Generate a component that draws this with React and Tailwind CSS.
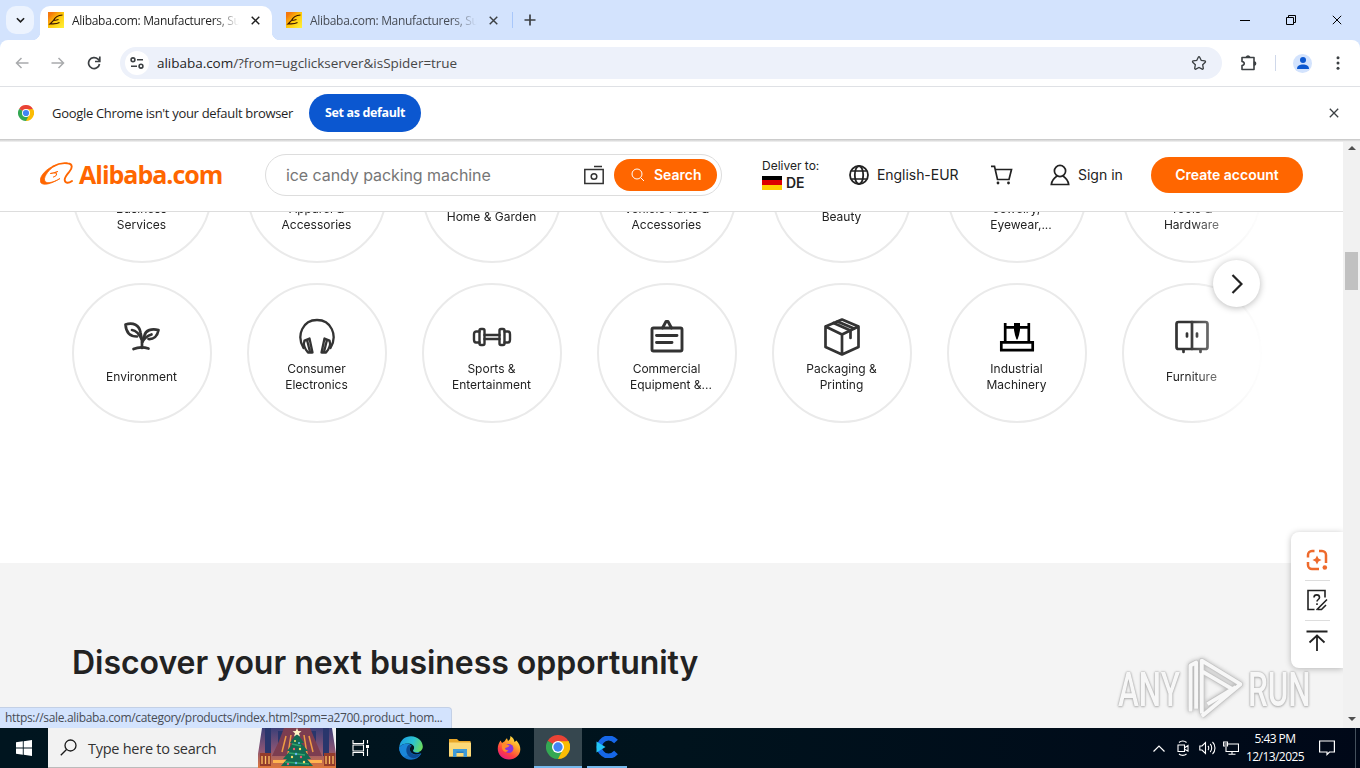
import { FaStar } from 'react-icons/fa';

const CHROME_FONT = "font-['Open_Sans','Noto_Sans',sans-serif]";

const TOP_ROW = [
  ['Business', 'Services'],
  ['Apparel &', 'Accessories'],
  ['Home & Garden'],
  ['Vehicle Parts &', 'Accessories'],
  ['Beauty'],
  ['Jewelry,', 'Eyewear,...'],
  ['Tools &', 'Hardware'],
];

const BOTTOM_ROW = [
  { lines: ['Environment'], icon: LeafIcon },
  { lines: ['Consumer', 'Electronics'], icon: HeadphonesIcon },
  { lines: ['Sports &', 'Entertainment'], icon: DumbbellIcon },
  { lines: ['Commercial', 'Equipment &...'], icon: SignIcon },
  { lines: ['Packaging &', 'Printing'], icon: BoxIcon },
  { lines: ['Industrial', 'Machinery'], icon: MachineIcon },
  { lines: ['Furniture'], icon: CabinetIcon },
];

/* ---------- category icons, 40x40 ---------- */

function CategorySvg({ children, color = '#333', width = 2.7 }) {
  return (
    <svg viewBox="0 0 40 40" className="w-10 h-10" fill="none" stroke={color} strokeWidth={width} strokeLinecap="round" strokeLinejoin="round">
      {children}
    </svg>
  );
}

function LeafIcon() {
  return (
    <CategorySvg>
      <path d="M15 19.500C8 19.500 4 15 3.500 7.500C11 5 17.500 8 18.500 15.500C19 18 19.500 21 20 23" />
      <path d="M10 13C14 13.500 17.500 17.500 20 23V31" />
      <path d="M26.500 22C31.500 22.500 35.500 19 36.500 13C29.500 11.500 23.500 13 22.500 18.500C22.300 20 21 22 20.200 25" />
      <path d="M29.500 17.500C26 18.500 22.500 21 20.200 25" />
      <path d="M11.500 32C16 30 22 30 26.500 31.500" />
    </CategorySvg>
  );
}

function HeadphonesIcon() {
  return (
    <CategorySvg width={2.300}>
      <path d="M6.500 31C-1 18 6 3 20 3S41 18 33.500 31" />
      <path d="M7.500 23.500L12.500 21.500L15.500 35.500H11C8 32 6 27.500 7.500 23.500ZM10 22.800L13 35" />
      <path d="M32.500 23.500L27.500 21.500L24.500 35.500H29C32 32 34 27.500 32.500 23.500ZM30 22.800L27 35" />
    </CategorySvg>
  );
}

function DumbbellIcon() {
  return (
    <CategorySvg width={2.400}>
      <rect x="7.500" y="12" width="5" height="16" rx="1.500" />
      <rect x="27.500" y="12" width="5" height="16" rx="1.500" />
      <path d="M7.500 14.500H4C2.500 14.500 2 16 2 17.500V22.500C2 24 2.500 25.500 4 25.500H7.500" />
      <path d="M32.500 14.500H36C37.500 14.500 38 16 38 17.500V22.500C38 24 37.500 25.500 36 25.500H32.500" />
      <path d="M12.500 18H27.500M12.500 22H27.500" />
    </CategorySvg>
  );
}

function SignIcon() {
  return (
    <CategorySvg width={2.900}>
      <rect x="5" y="11" width="30" height="23" rx="1.500" />
      <path d="M15.500 11L19 4.500H21L24.500 11M9.500 18.500H30M9.500 25.500H25" />
    </CategorySvg>
  );
}

function BoxIcon() {
  return (
    <CategorySvg width={2.700}>
      <path d="M20 2.500L36.500 9.500V30L20 37.500L3.500 30V9.500ZM3.500 9.500L20 17.500L36.500 9.500M20 17.500V37.500" />
      <path d="M11.500 6L28.500 13.500V21M15.500 4.500L32 11.500" />
    </CategorySvg>
  );
}

function MachineIcon() {
  return (
    <svg viewBox="0 0 40 40" className="w-10 h-10" fill="none" stroke="#000" strokeWidth="2.700">
      <path d="M4.300 25.300H35.700V33.200H4.300ZM8.200 6V25M31.800 6V25M8 10.300H32" />
      <path d="M17 6H23V13L22 18L20.500 22.500H19.500L18 18L17 13Z" fill="#000" stroke="none" />
    </svg>
  );
}

function CabinetIcon() {
  return (
    <CategorySvg>
      <rect x="4.500" y="5" width="31" height="27" rx="2" />
      <path d="M20 5V32M15 16.500V19.500M25 16.500V19.500M11.500 33V35M28.500 33V35" />
    </CategorySvg>
  );
}

/* ---------- brand marks ---------- */

function ChromeLogo({ className }) {
  return (
    <svg viewBox="0 0 48 48" className={className}>
      <path d="M24 24L3.200 12A24 24 0 0 1 44.800 12Z" fill="#ea4335" />
      <path d="M24 24L44.800 12A24 24 0 0 1 24 48Z" fill="#fbbc04" />
      <path d="M24 24V48A24 24 0 0 1 3.200 12Z" fill="#34a853" />
      <path d="M14.500 29.500L3.200 12L24 24ZM33.500 29.500L24 48L24 30Z" fill="#34a853" />
      <path d="M24 12.500H45A24 24 0 0 1 47 30L33 29Z" fill="#fbbc04" />
      <circle cx="24" cy="24" r="12" fill="#fff" />
      <circle cx="24" cy="24" r="9.300" fill="#4285f4" />
    </svg>
  );
}

function EdgeLogo() {
  return (
    <svg viewBox="0 0 24 24" className="w-6 h-6">
      <defs>
        <linearGradient id="edgeTop" x1="0" x2="1" y1=".3" y2=".6">
          <stop offset="0" stopColor="#1b9de2" />
          <stop offset=".55" stopColor="#2bc3d2" />
          <stop offset="1" stopColor="#6bdc5c" />
        </linearGradient>
      </defs>
      <path d="M.2 11C0 18 5 23.800 12 23.800C16.500 23.800 20 21.500 22.300 17.800L12 12Z" fill="#1473c8" />
      <path d="M.2 11.500C1 4 6 .2 12 .2C19 .2 23.800 5.500 23.800 10.500C23.800 14.500 20.500 16.300 17.500 16.300C14.500 16.300 13.500 15 14.500 13.800C16.500 10.500 13.500 7.800 9.500 7.600C5 7.500 1.800 9 .2 11.500Z" fill="url(#edgeTop)" />
      <path d="M.2 11.500C1.800 9 5 7.500 9.500 7.600L12.500 9.800L10 18L5 21C2 19 0 15 .2 11.500Z" fill="#1a86d9" />
      <path d="M9.500 9C6 12 6.500 19.500 12.500 21.800C16.500 23.200 20 20.500 22 17.800C17 20.300 10.500 18.500 10.800 13C11 11 12 10.300 12.500 9.800C11.500 9 10.500 8.800 9.500 9Z" fill="#0c4a92" />
      <path d="M11.200 11.500C9.800 15 13 19 18.500 18.300C20.500 18 22 17 22.800 16.300C20 17.500 16 17.200 14.500 15.800C13 14.300 15.500 13 14.500 11.200C13.500 9.800 11.800 10 11.200 11.500Z" fill="#02141f" />
    </svg>
  );
}

function FolderIcon() {
  return (
    <svg viewBox="0 0 22 20" className="w-[22px] h-5">
      <path d="M0 1H8L10 3H21.500V18.500H0Z" fill="#e8a628" />
      <path d="M0 4.500H22V18.500H0Z" fill="#fcd978" />
      <path d="M4 11H18V19H14.500V15H7.500V19H4Z" fill="#3f9bd8" />
      <path d="M7.500 13.500H14.500V15H7.500Z" fill="#2a7dbc" />
    </svg>
  );
}

function FirefoxLogo() {
  return (
    <svg viewBox="0 0 24 24" className="w-6 h-6">
      <defs>
        <linearGradient id="fox" x1=".8" x2=".2" y1="0" y2="1">
          <stop offset="0" stopColor="#fff04a" />
          <stop offset=".35" stopColor="#ffa22a" />
          <stop offset=".7" stopColor="#ff4040" />
          <stop offset="1" stopColor="#e3168a" />
        </linearGradient>
      </defs>
      <path d="M3.500 4.500L5 7L8 5C8.500 3.500 9 3 10 2.200L11 5C13 4 13.500 2 13.300 0C16 1.500 17.500 4 17.500 6L19.500 4.500C24.500 10 24.500 16.500 20 20.500C16 24.500 8 24.500 4 20.500C-.5 16 0 9.500 3.500 4.500Z" fill="url(#fox)" />
      <circle cx="11.800" cy="12.500" r="4.600" fill="#8a35dc" />
      <path d="M5 7.500C8 7 10 8.500 12.500 9.500C12 11.500 9 11 8 12.500C8.500 14 10 14.500 11.500 14C9 18 5.500 15 5 12Z" fill="#ff8a2a" />
    </svg>
  );
}

function AlibabaSwirl() {
  return (
    <svg viewBox="0 0 34 24" className="w-[34px] h-6 -mt-px" fill="none" stroke="#ff6600" strokeLinecap="round">
      <path d="M15 3.500C6 6.500 .2 14 .2 18.500C.2 24 9 23.500 20 16.500C13 20.800 5 22.500 4.500 18C4 14 9 7.500 15 3.500Z" fill="#ff6600" strokeWidth=".8" />
      <path d="M13 4.500C18 1.500 24 .8 27.500 1.300C33.500 2 32 6.500 29.500 9.500C27 12.500 24.500 15 24.700 18C25 21.500 28.500 21.500 32 19" strokeWidth="1.900" />
      <path d="M10.500 11.500C12.500 11.200 15 11 17.500 9.500M15 10.800C17.500 11.200 17 14 13.500 15" strokeWidth="1.100" />
    </svg>
  );
}

/* ---------- browser chrome ---------- */

function Cross({ className }) {
  return (
    <svg viewBox="0 0 10 10" className={className} stroke="currentColor" fill="none">
      <path d="M.8 .8L9.200 9.200M9.200 .8L.8 9.200" />
    </svg>
  );
}

function Favicon() {
  return (
    <svg viewBox="0 0 16 16" className="w-4 h-4 shrink-0">
      <defs>
        <linearGradient id="fav" x1="0" x2="1" y1="0" y2="1">
          <stop offset=".15" stopColor="#f5780c" />
          <stop offset=".5" stopColor="#ffc80a" />
          <stop offset="1" stopColor="#fff23a" />
        </linearGradient>
      </defs>
      <path d="M0 0H16V16H0Z" fill="url(#fav)" />
      <path d="M14.500 3C9 3.500 7 5 5.500 8.500L2 12C5 11.500 8 12.500 11.500 10.500M5 8.500C7 8.500 9 8 10.500 7.500" stroke="#3a1500" strokeWidth="1.100" fill="none" />
    </svg>
  );
}

function TabStrip() {
  return (
    <div className="h-10 bg-[#d3e3fd] flex pt-[6px]">
      <div className="ml-[6px] w-7 h-7 rounded-[10px] bg-[#ecf3fe] flex items-center justify-center text-[#1f1f1f]">
        <svg viewBox="0 0 10 6" className="w-[9px] h-[6px]" fill="none" stroke="currentColor" strokeWidth="1.800">
          <path d="M1 1L5 5L9 1" />
        </svg>
      </div>
      <div className="relative ml-[6px] w-[232px] h-[34px] rounded-t-[10px] bg-white flex items-start pt-[6px] pl-2">
        <span className="absolute -left-2 bottom-0 w-2 h-2 bg-[radial-gradient(circle_at_0_0,#d3e3fd_8px,#fff_8.500px)]" />
        <span className="absolute -right-2 bottom-0 w-2 h-2 bg-[radial-gradient(circle_at_100%_0,#d3e3fd_8px,#fff_8.500px)]" />
        <Favicon />
        <span className="ml-2 w-[167px] overflow-hidden whitespace-nowrap text-[12px] leading-[17px] tracking-[-0.31px] text-[#1f1f1f] mask-r-from-85% mask-r-to-100%">
          Alibaba.com: Manufacturers, Suppliers
        </span>
        <Cross className="ml-[12px] mt-1 w-[9px] h-[9px] text-[#1f1f1f] stroke-[1.600]" />
      </div>
      <div className="w-[240px] flex items-start pt-[6px] pl-[14px]">
        <Favicon />
        <span className="ml-2 w-[167px] overflow-hidden whitespace-nowrap text-[12px] leading-[17px] tracking-[-0.31px] text-[#474c55] mask-r-from-85% mask-r-to-100%">
          Alibaba.com: Manufacturers, Suppliers
        </span>
        <Cross className="ml-[12px] mt-1 w-[9px] h-[9px] text-[#3c4043] stroke-[1.600]" />
      </div>
      <span className="mt-[6px] w-px h-4 bg-[#a8c7fa]" />
      <svg viewBox="0 0 12 12" className="ml-[11px] mt-2 w-3 h-3 text-[#3c4043]" stroke="currentColor" strokeWidth="1.700">
        <path d="M6 .5V11.500M.5 6H11.500" />
      </svg>
      <div className="ml-auto mr-[18px] mt-[9px] flex gap-9 text-black">
        <svg viewBox="0 0 10 10" className="w-[10px] h-[10px]" stroke="currentColor">
          <path d="M0 5.500H10" />
        </svg>
        <svg viewBox="0 0 10 10" className="w-[10px] h-[10px]" stroke="currentColor" fill="none">
          <path d="M.5 2.500H7.500V9.500H.5ZM2.500 2.500V.5H9.500V7.500H7.500" />
        </svg>
        <Cross className="w-[10px] h-[10px]" />
      </div>
    </div>
  );
}

function Toolbar() {
  return (
    <div className="bg-[#d3e3fd]">
      <div className="h-[47px] rounded-t-[8px] bg-white border-b border-[#dfe1e5] flex items-start pt-[7px]">
        <div className="h-8 flex items-center">
          <svg viewBox="0 0 14 12" className="ml-[15px] w-[14px] h-3 text-[#a9abad]" fill="none" stroke="currentColor" strokeWidth="1.500">
            <path d="M13.500 6H1.500M6.500 1L1.500 6L6.500 11" />
          </svg>
          <svg viewBox="0 0 14 12" className="ml-[22px] w-[14px] h-3 text-[#a9abad]" fill="none" stroke="currentColor" strokeWidth="1.500">
            <path d="M.5 6H12.500M7.500 1L12.500 6L7.500 11" />
          </svg>
          <svg viewBox="0 0 14 14" className="ml-[22px] w-[14px] h-[14px] text-[#3c4043]" fill="none" stroke="currentColor" strokeWidth="1.700">
            <path d="M12.500 8A5.500 5.500 0 1 1 11 3.200L12.500 4.700" />
            <path d="M12.800 .5V5.500H8" />
          </svg>
        </div>
        <div className="ml-[19px] w-[1102px] h-8 rounded-full bg-[#edf1fa] flex items-center pl-[5px]">
          <span className="w-6 h-6 rounded-full bg-white flex items-center justify-center">
            <svg viewBox="0 0 14 12" className="w-[14px] h-3 text-[#3c4043]" fill="none" stroke="currentColor" strokeWidth="1.600">
              <circle cx="3" cy="2.800" r="1.900" />
              <circle cx="11" cy="9.200" r="1.900" />
              <path d="M7 2.800H13M1 9.200H7" />
            </svg>
          </span>
          <span className="ml-2 text-[13.500px] tracking-[-0.03px] text-[#474747] whitespace-nowrap">
            <span className="text-[#1f1f1f]">alibaba.com</span>/?from=ugclickserver&amp;isSpider=true
          </span>
          <FaStar className="ml-auto mr-4 -mt-px w-[14px] h-[14px] fill-transparent stroke-[#3c4043] stroke-[55px] overflow-visible" />
        </div>
        <div className="h-8 flex items-center">
          <svg viewBox="0 0 18 17" className="ml-[18px] -mt-[2px] w-[18px] h-[17px] text-[#3c4043]" fill="none" stroke="currentColor" strokeWidth="1.600" strokeLinejoin="round">
            <path d="M2 3.500H14V15.500H2V11.500C5 11 5 8 2 7.500Z" />
            <path d="M6.500 3A1.600 1.600 0 0 1 9.500 3ZM14.500 8A1.600 1.600 0 0 1 14.500 11Z" fill="currentColor" />
          </svg>
          <span className="ml-[17px] w-px h-4 bg-[#cfd8ea]" />
          <span className="ml-[17px] w-[19px] h-[19px] rounded-full bg-[#d3e3fd] flex items-center justify-center">
            <svg viewBox="0 0 12 12" className="w-3 h-3" fill="#0b57d0">
              <circle cx="6" cy="3" r="3" />
              <path d="M0 12C0 8.500 3 7.500 6 7.500S12 8.500 12 12Z" />
            </svg>
          </span>
          <svg viewBox="0 0 4 14" className="ml-[24px] w-1 h-[14px]" fill="#3c4043">
            <circle cx="2" cy="1.800" r="1.500" />
            <circle cx="2" cy="7" r="1.500" />
            <circle cx="2" cy="12.200" r="1.500" />
          </svg>
        </div>
      </div>
    </div>
  );
}

function InfoBar() {
  return (
    <div className="h-[52px] bg-white flex items-center pl-[18px] pr-[21px]">
      <ChromeLogo className="w-4 h-4" />
      <span className="ml-[18px] mt-px w-[257px] text-[13px] tracking-[-0.31px] text-[#1f1f1f] whitespace-nowrap">
        Google Chrome isn't your default browser
      </span>
      <button className="w-28 h-[38px] pt-px rounded-full bg-[#0b57d0] text-white text-[12.500px] font-bold tracking-[-0.35px] whitespace-nowrap">
        Set as default
      </button>
      <Cross className="ml-auto w-[10px] h-[10px] text-[#3c4043] stroke-[1.300]" />
    </div>
  );
}

/* ---------- page ---------- */

function SiteHeader() {
  return (
    <header className="h-[72px] shrink-0 bg-white border-b border-[#ddd] flex items-center pl-10 pr-10 pb-[2px] text-[14px] text-[#222] whitespace-nowrap">
      <AlibabaSwirl />
      <span className="ml-[5px] w-[186px] font-['Open_Sans'] font-bold text-[25px] tracking-[-1px] text-[#ff6600]">Alibaba.com</span>
      <div className="w-[457px] h-[42px] rounded-full border border-[#ddd] flex items-center pl-5 pr-1">
        <span className="w-[298px] text-[16px] tracking-[-0.08px] text-[#767676]">ice candy packing machine</span>
        <svg viewBox="0 0 20 20" className="w-5 h-5 shrink-0" fill="none" stroke="#333" strokeWidth="1.500">
          <path d="M.8 4.500H19.200V18.500H.8ZM10 1.500H18" />
          <circle cx="10" cy="11.500" r="2.800" />
        </svg>
        <button className="ml-[10px] w-[103px] h-8 shrink-0 rounded-full bg-[#ff6600] text-white font-semibold flex items-center pl-[17px]">
          <svg viewBox="0 0 14 14" className="w-[14px] h-[14px] mr-[9px]" fill="none" stroke="currentColor" strokeWidth="1">
            <circle cx="6" cy="6" r="5" />
            <path d="M9.800 9.800L13 13" />
          </svg>
          Search
        </button>
      </div>
      <div className="ml-10 w-[87px]">
        <div className="text-[12px] leading-4">Deliver to:</div>
        <div className="flex items-center leading-[18px] font-semibold">
          <span className="w-5 h-[14px] mr-1 flex flex-col">
            <i className="flex-1 bg-black" />
            <i className="flex-1 bg-[#d00]" />
            <i className="flex-1 bg-[#ffce00]" />
          </span>
          DE
        </div>
      </div>
      <svg viewBox="0 0 20 20" className="w-5 h-5 mr-2" fill="none" stroke="#222" strokeWidth="1.800">
        <circle cx="10" cy="10" r="9" />
        <ellipse cx="10" cy="10" rx="4.200" ry="9" />
        <path d="M2.500 6H17.500M2.500 14H17.500" strokeWidth="1.500" />
      </svg>
      <span className="w-[114px] tracking-[-0.05px]">English-EUR</span>
      <svg viewBox="0 0 22 20" className="w-[22px] h-5 mr-[37px]" fill="none" stroke="#222" strokeWidth="1.700">
        <path d="M0 1.300H3.500L6.500 14.500H18L20.500 4.500H4.200" />
        <circle cx="7" cy="18" r="1.400" fill="#222" stroke="none" />
        <circle cx="17.500" cy="18" r="1.400" fill="#222" stroke="none" />
      </svg>
      <svg viewBox="0 0 20 22" className="w-5 h-[22px] mr-2" fill="none" stroke="#222" strokeWidth="1.700">
        <circle cx="10" cy="7" r="5.600" />
        <path d="M7 12C4 14 1.800 17 1.300 20.500H18.700C18.200 17 16 14 13 12" />
      </svg>
      <span className="w-[73px]">Sign in</span>
      <button className="w-[152px] h-9 shrink-0 rounded-full bg-[#ff6600] text-white font-semibold">Create account</button>
    </header>
  );
}

function CategoryCircle({ lines, icon: Icon }) {
  return (
    <div className="w-[140px] h-[140px] shrink-0 rounded-full border-2 border-[#eaeaea] flex flex-col items-center pt-8">
      <div className="w-10 h-10">{Icon && <Icon />}</div>
      <div className="mt-1 mr-px h-8 flex flex-col justify-center text-center text-[12px] leading-4 text-[#222] whitespace-nowrap">
        {lines.map((line) => (
          <div key={line} className={line.endsWith('...') ? '-mr-[9px]' : ''}>{line}</div>
        ))}
      </div>
    </div>
  );
}

function Categories() {
  return (
    <section className="relative h-[351px] shrink-0 bg-white pl-[72px]">
      <div className="w-[1200px] h-full overflow-hidden mask-r-from-[1116px] mask-r-to-[1194px]">
        <div className="-mt-[89px] flex gap-[35px]">
          {TOP_ROW.map((lines) => (
            <CategoryCircle key={lines.join()} lines={lines} />
          ))}
        </div>
        <div className="mt-5 flex gap-[35px]">
          {BOTTOM_ROW.map((c) => (
            <CategoryCircle key={c.lines.join()} lines={c.lines} icon={c.icon} />
          ))}
        </div>
      </div>
      <button className="absolute left-[1213px] top-[48px] w-[47px] h-[47px] rounded-full bg-white shadow-[0_1px_7px_rgba(0,0,0,0.28)] flex items-center justify-center">
        <svg viewBox="0 0 12 20" className="w-3 h-5" fill="none" stroke="#222" strokeWidth="2.200">
          <path d="M1.500 1L10.500 10L1.500 19" />
        </svg>
      </button>
    </section>
  );
}

function SideTools() {
  return (
    <div className="absolute right-[17px] top-[392px] w-[52px] h-[136px] rounded-l-lg bg-white shadow-[0_1px_6px_rgba(0,0,0,0.25)] flex flex-col items-center pt-2">
      <div className="h-[41px] w-[25px] border-b border-[#ddd] flex items-center justify-center">
        <svg viewBox="0 0 22 22" className="w-[22px] h-[22px] shrink-0" fill="none" stroke="#ee6a2c" strokeWidth="2.500">
          <path d="M8.500 2H6A4 4 0 0 0 2 6V8.500M2 13V16A4 4 0 0 0 6 20H13M13 2H16A4 4 0 0 1 20 6V14" />
          <path d="M11 6.500L12.500 9.500L15.500 11L12.500 12.500L11 15.500L9.500 12.500L6.500 11L9.500 9.500Z" fill="#ee6a2c" stroke="none" />
          <circle cx="18.800" cy="18.500" r="2.300" fill="#ee6a2c" stroke="none" />
        </svg>
      </div>
      <div className="h-10 w-[25px] border-b border-[#ddd] flex items-center justify-center pb-[2px]">
        <svg viewBox="0 0 22 22" className="w-[22px] h-[22px] shrink-0" fill="none" stroke="#222" strokeWidth="1.600">
          <path d="M8.500 20.500H2V1.500H19V8.500M10.500 21L21 10.500M12 20.500H15.500L20 16" />
          <path d="M8 8.500C8 5 13.500 5 13.500 8.500C13.500 10.500 11 10.500 11 12.500M11 14.300V16" />
        </svg>
      </div>
      <div className="h-10 flex items-center">
        <svg viewBox="0 0 22 22" className="w-[22px] h-[22px]" fill="none" stroke="#222" strokeWidth="1.800">
          <path d="M.5 1.500H21.500M11 21V5.500M3.500 12.500L11 5.500L18.500 12.500" />
        </svg>
      </div>
    </div>
  );
}

function Watermark() {
  const letters =
    "text-[48px] leading-[50px] font-['Roboto'] font-medium text-[#f9f9f9] origin-left [text-shadow:0_0_2px_#888,0_0_3px_#aaa,0_1px_3px_#aaa]";
  return (
    <div className="absolute left-[1118px] top-[510px] w-[200px] h-[76px] opacity-75">
      <span className={`absolute left-0 top-[15px] scale-x-[0.655] ${letters}`}>ANY</span>
      <svg viewBox="0 0 60 70" className="absolute left-[67px] top-[5px] w-[60px] h-[66px] drop-shadow-[0_0_2px_#999]" fill="none">
        <path d="M4 60V11L10 8V57M16 62V6L57 31L16 65M16 17L48 36M22 52L52 34" stroke="#b4b4b4" strokeWidth="5.500" strokeLinejoin="round" />
        <path d="M4 60V11L10 8V57M16 62V6L57 31L16 65M16 17L48 36M22 52L52 34" stroke="#f8f8f8" strokeWidth="4" strokeLinejoin="round" />
      </svg>
      <span className={`absolute left-[130px] top-[15px] scale-x-[0.655] ${letters}`}>RUN</span>
    </div>
  );
}

function Scrollbar() {
  return (
    <div className="relative w-[17px] shrink-0 bg-[#f1f1f1] flex flex-col items-center">
      <svg viewBox="0 0 8 4" className="mt-[6px] w-2 h-1" fill="#505050">
        <path d="M0 4L4 0L8 4Z" />
      </svg>
      <span className="mt-[102px] w-[13px] h-[38px] bg-[#c1c1c1]" />
      <svg viewBox="0 0 8 4" className="mt-auto mb-[7px] w-2 h-1" fill="#505050">
        <path d="M0 0L4 4L8 0Z" />
      </svg>
    </div>
  );
}

function Page() {
  return (
    <div className="relative h-[588px] flex mt-px font-['Inter',sans-serif]">
      <main className="w-[1343px] flex flex-col overflow-hidden">
        <SiteHeader />
        <Categories />
        <section className="flex-1 bg-[#f4f4f4] pl-[72px] pt-20">
          <h2 className="text-[32px] leading-10 font-semibold tracking-[-0.03px] text-[#222] whitespace-nowrap">
            Discover your next business opportunity
          </h2>
        </section>
      </main>
      <SideTools />
      <Scrollbar />
      <Watermark />
      <div className="absolute inset-x-0 -top-px h-[3px] bg-linear-to-b from-[#c4c4c4] to-[#f4f4f4]" />
      <div className={`absolute left-0 bottom-0 w-[452px] h-[21px] rounded-tr-[4px] border-t border-r border-[#c3d0e6] bg-[#d3e3fd] pl-[5px] text-[12px] leading-5 tracking-[-0.33px] text-[#474c55] whitespace-nowrap ${CHROME_FONT}`}>
        https://sale.alibaba.com/category/products/index.html?spm=a2700.product_hom...
      </div>
    </div>
  );
}

/* ---------- taskbar ---------- */

function HolidayArt() {
  return (
    <svg viewBox="0 0 78 40" className="w-[78px] h-10">
      <defs>
        <linearGradient id="sky" x1="0" x2="0" y1="0" y2="1">
          <stop offset="0" stopColor="#3b3f78" />
          <stop offset=".55" stopColor="#8a5575" />
          <stop offset="1" stopColor="#e0783a" />
        </linearGradient>
      </defs>
      <path d="M4 0H74L78 26V40H0V26Z" fill="url(#sky)" />
      <path d="M7 0H13V28H7ZM20 3H25V28H20ZM53 3H58V28H53ZM65 0H71V28H65Z" fill="#29366c" />
      <path d="M26 0H52L58 14L64 28H14L21 13Z" fill="#7c3d50" />
      <path d="M28 8L24 24M33 7L30 26M46 7L49 26M51 8L55 24" stroke="#ef9b45" strokeWidth="1.500" />
      <path d="M2 25H13V38H2ZM66 25H77V38H66Z" fill="#933c2c" />
      <path d="M4 28V36M7.500 28V36M11 28V36M68 28V36M71.500 28V36M75 28V36" stroke="#ffc063" strokeWidth="1.300" />
      <path d="M15 32H64V35H15Z" fill="#ffb34f" />
      <path d="M39 5L46 15H43L50 23H47L53 31H49L55 38H23L29 31H25L32 23H29L35 15H32Z" fill="#136a52" />
      <path d="M34 16L43 18M31 25L47 27M27 34L51 36" stroke="#31a56b" strokeWidth="1.500" />
      <g fill="#ffe06a">
        <circle cx="37" cy="13" r="1" />
        <circle cx="42" cy="21" r="1.200" />
        <circle cx="34" cy="29" r="1.200" />
        <circle cx="46" cy="34" r="1.200" />
      </g>
      <g fill="#ee5b70">
        <circle cx="36" cy="21" r="1.200" />
        <circle cx="43" cy="29" r="1.200" />
        <circle cx="30" cy="36" r="1.200" />
      </g>
      <g fill="#68b9ef">
        <circle cx="41" cy="15" r="1" />
        <circle cx="38" cy="26" r="1.200" />
        <circle cx="38" cy="35" r="1.200" />
      </g>
      <path d="M39 0L40.300 3L43.500 3.200L41 5.200L42 8.500L39 6.500L36 8.500L37 5.200L34.500 3.200L37.700 3Z" fill="#fff3c4" />
    </svg>
  );
}

function TaskSlot({ children }) {
  return <div className="w-[49px] h-10 flex items-center justify-center">{children}</div>;
}

function Taskbar() {
  return (
    <div className="h-10 bg-linear-to-r from-[#00151f] via-[#00131d] to-[#000818] flex text-white">
      <div className="w-12 flex items-center justify-center">
        <svg viewBox="0 0 16 16" className="w-4 h-4" fill="#fff">
          <path d="M0 2.300L6.800 1.300V7.600H0ZM7.700 1.200L16 0V7.600H7.700ZM0 8.400H6.800V14.700L0 13.700ZM7.700 8.400H16V16L7.700 14.800Z" />
        </svg>
      </div>
      <div className="w-72 bg-[#f2f2f2] border-b border-[#bbb] flex items-center pl-3 text-[#333]">
        <svg viewBox="0 0 17 17" className="w-[17px] h-[17px]" fill="none" stroke="#1a1a1a" strokeWidth="1.300">
          <circle cx="10.500" cy="6.500" r="5.500" />
          <path d="M6.500 10.500L.8 16.200" />
        </svg>
        <span className="ml-[11px] mt-[2px] w-[170px] text-[14.500px] tracking-[-0.26px] whitespace-nowrap">Type here to search</span>
        <HolidayArt />
      </div>
      <div className="w-12 flex items-center justify-center">
        <svg viewBox="0 0 17 16" className="w-[17px] h-4" fill="none" stroke="#fff" strokeWidth="1.100">
          <path d="M1 0V3.500H11.500V0M1 16V12.500H11.500V16M1 5H11.500V11H1ZM15.500 0V3.500M15.500 8.500V16" />
          <path d="M14 5H17V8H14Z" fill="#fff" stroke="none" />
        </svg>
      </div>
      <div className="flex ml-[2px]">
        <TaskSlot><EdgeLogo /></TaskSlot>
        <TaskSlot><FolderIcon /></TaskSlot>
        <TaskSlot><FirefoxLogo /></TaskSlot>
        <div className="ml-px w-12 h-10 bg-[#36474f] border-b-2 border-[#76b9ed] flex items-center justify-center">
          <ChromeLogo className="w-6 h-6" />
        </div>
        <div className="ml-[5px] w-10 h-10 border-b-2 border-[#76b9ed] flex items-center justify-center">
          <svg viewBox="0 0 22 22" className="w-[22px] h-[22px]" fill="none">
            <path d="M20 5.500C15.500 .5 9 1 5.500 5.500C2.500 9 2.500 13 5.500 16.500C9 21 15.500 21.500 20 16.500" stroke="#1667e8" strokeWidth="5" />
            <path d="M.5 5.500L9.500 11L.5 16.500Z" fill="#23c5f5" />
          </svg>
        </div>
      </div>
      <div className="ml-auto flex items-center">
        <svg viewBox="0 0 12 7" className="w-3 h-[7px]" fill="none" stroke="#fff" strokeWidth="1.200">
          <path d="M.5 6.500L6 1L11.500 6.500" />
        </svg>
        <svg viewBox="0 0 12 16" className="ml-3 w-3 h-4" fill="none" stroke="#fff" strokeWidth="1.100">
          <path d="M1 5H7.500V11.500H1ZM8 7.500L11 5.500V11L8 9.500M2 2.500C4 .5 7.500 .5 9.500 2.500M2 14C4 15.800 7.500 15.800 9.500 14" />
        </svg>
        <svg viewBox="0 0 17 14" className="ml-[10px] w-[17px] h-[14px]" fill="none" stroke="#fff" strokeWidth="1.100">
          <path d="M.8 5H3L6.500 1.500V12.500L3 9H.8ZM9 5C10 6 10 8 9 9M11.200 3C13.200 5 13.200 9 11.200 11M13.500 1C16.800 4 16.800 10 13.500 13" />
        </svg>
        <svg viewBox="0 0 16 14" className="ml-[7px] w-4 h-[14px]" fill="none" stroke="#fff" strokeWidth="1.100">
          <path d="M5 3H15.500V10.500H3V6M.6 1H4.500V5H.6ZM1.500 3H4M9 10.500V13M5.500 13.300H12.500" />
        </svg>
        <div className="ml-[7px] w-[58px] flex flex-col items-center text-[12px] leading-[18px] tracking-[-0.55px] whitespace-nowrap">
          <span>5:43 PM</span>
          <span>12/13/2025</span>
        </div>
        <svg viewBox="0 0 16 16" className="ml-[15px] w-4 h-4" fill="none" stroke="#fff" strokeWidth="1.200">
          <path d="M.6 1H15.400V12H10.500L8 14.500V12H.6Z" />
        </svg>
        <span className="ml-[20px] mr-1 w-px h-10 bg-[#44505c]" />
      </div>
    </div>
  );
}

export default function App() {
  return (
    <div className={`w-[1360px] h-[768px] overflow-hidden flex flex-col bg-white ${CHROME_FONT}`}>
      <TabStrip />
      <Toolbar />
      <InfoBar />
      <Page />
      <Taskbar />
    </div>
  );
}
